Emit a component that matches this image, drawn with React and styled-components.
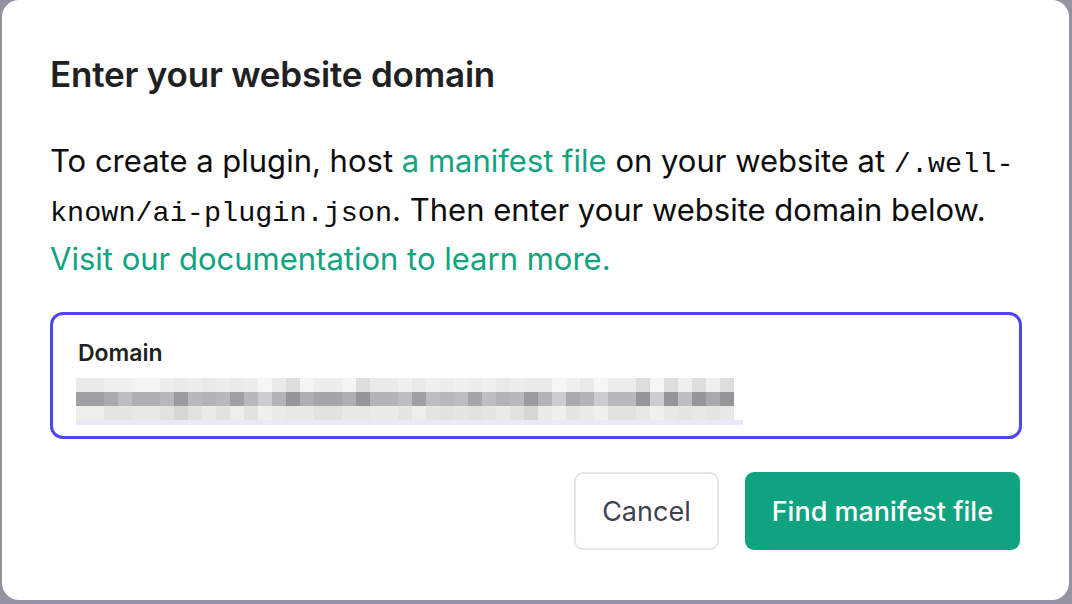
import React from 'react'
import styled, { createGlobalStyle } from 'styled-components'

const GlobalStyle = createGlobalStyle`
  html, body {
    margin: 0;
    padding: 0;
    background: #9593a1;
  }
  body {
    font-family: Inter, "Liberation Sans", Arial, sans-serif;
    -webkit-font-smoothing: antialiased;
  }
`;

const Page = styled.div`
  padding: 0 3px 4px 2px;
  width: 1072px;
  height: 604px;
  box-sizing: border-box;
  overflow: hidden;
`;

const Modal = styled.div`
  background: #ffffff;
  border-radius: 17px;
  height: 600px;
  box-sizing: border-box;
  padding: 53px 47px 50px 48px;
  display: flex;
  flex-direction: column;
  & > * {
    flex-shrink: 0;
  }
`;

const Title = styled.h2`
  margin: 0;
  font-size: 35px;
  line-height: 42px;
  font-weight: 600;
  color: #202123;
  letter-spacing: -0.2px;
`;

const Body = styled.p`
  margin: 41px 0 0;
  font-size: 31px;
  line-height: 49px;
  color: #0d0d0d;
`;

const Link = styled.a`
  color: #10a37f;
  text-decoration: none;
`;

const Code = styled.code`
  font-family: "Liberation Mono", "DejaVu Sans Mono", monospace;
  font-size: 28.5px;
  line-height: 1;
`;

const Field = styled.label`
  margin-top: 29px;
  height: 127px;
  box-sizing: border-box;
  border: 3px solid #5046e5;
  border-radius: 13px;
  padding: 24px 23px 0;
  display: flex;
  flex-direction: column;
`;

const FieldLabel = styled.span`
  padding-left: 2px;
  font-size: 23px;
  line-height: 28px;
  font-weight: 600;
  color: #202123;
`;

const Blur = styled.div`
  margin-top: 11px;
  display: flex;
  flex-direction: column;
`;

const Underline = styled.div`
  width: 667px;
  height: 5px;
  background: #ebe8fb;
`;

const Actions = styled.div`
  margin-top: 33px;
  display: flex;
  justify-content: flex-end;
  gap: 26px;
  padding-right: 2px;
`;

const Button = styled.button`
  height: 78px;
  padding: 0 ${p => (p.$primary ? 27 : 26)}px;
  border-radius: 9px;
  font-family: Inter, "Liberation Sans", Arial, sans-serif;
  font-size: 27px;
  font-weight: ${p => (p.$primary ? 500 : 400)};
  cursor: pointer;
  border: ${p => (p.$primary ? 'none' : '2px solid #e6e6ea')};
  background: ${p => (p.$primary ? '#10a37f' : '#ffffff')};
  color: ${p => (p.$primary ? '#ffffff' : '#40414f')};
`;

// pixelated (redacted) domain text
const COLS = 47;
const cell = (r, c) => {
  const n = (c * 53 + r * 29 + ((c * c) % 17)) % 9;
  const gap = c === 13 || c === 34 || c === 37 || c === 41;
  if (r === 0) {
    const v = gap ? 246 : 234 + (n % 4) * 3 - (n === 7 ? 22 : 0);
    return `rgb(${v},${v},${v + 1})`;
  }
  if (r === 1) {
    const v = gap ? 205 : 150 + n * 5;
    return `rgb(${v},${v},${v + 2})`;
  }
  const v = gap ? 240 : 226 + (n % 5) * 3 - (n === 3 ? 20 : 0);
  return `rgb(${v},${v},${v - 4})`;
};

const Mosaic = () => (
  <svg width={COLS * 14} height={42} viewBox={`0 0 ${COLS * 14} 42`}>
    {[0, 1, 2].map(r =>
      Array.from({ length: COLS }, (_, c) => (
        <rect key={`${r}-${c}`} x={c * 14} y={r * 14} width={14} height={14} fill={cell(r, c)} />
      ))
    )}
  </svg>
);

const App = () => {
  return (
    <Page>
      <GlobalStyle />
      <Modal>
        <Title>Enter your website domain</Title>
        <Body>
          To create a plugin, host <Link href="#">a manifest file</Link> on your website at <Code>/.well-</Code>
          <br />
          <Code>known/ai-plugin.json</Code>. Then enter your website domain below.
          <br />
          <Link href="#">Visit our documentation to learn more.</Link>
        </Body>
        <Field>
          <FieldLabel>Domain</FieldLabel>
          <Blur>
            <Mosaic />
            <Underline />
          </Blur>
        </Field>
        <Actions>
          <Button>Cancel</Button>
          <Button $primary>Find manifest file</Button>
        </Actions>
      </Modal>
    </Page>
  )
}

export default App
